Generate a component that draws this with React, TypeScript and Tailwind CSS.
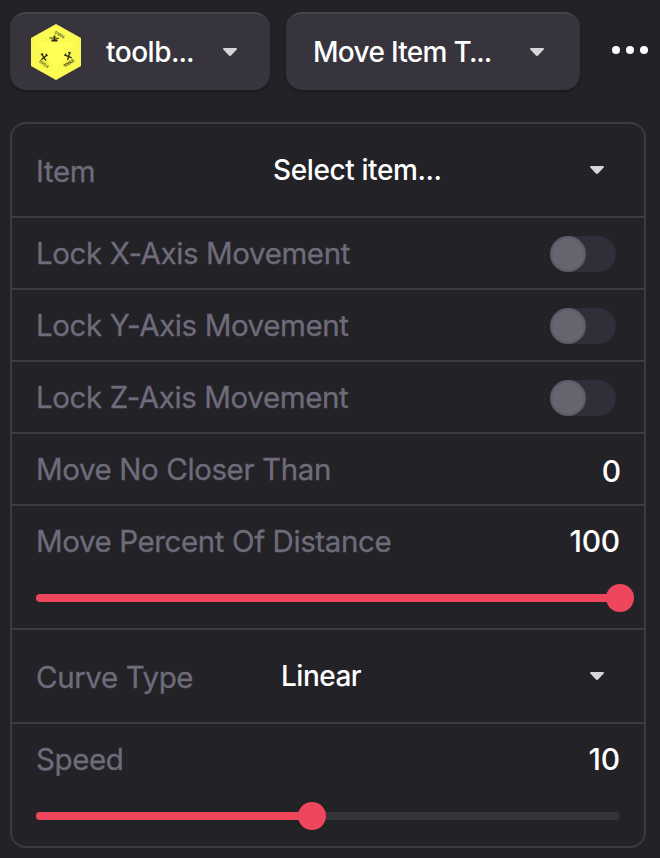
import type { ReactNode } from "react";

function Caret({ className = "" }: { className?: string }) {
  return (
    <svg className={`h-2 w-3.5 shrink-0 ${className}`} viewBox="0 0 14 8" fill="#d6d6d8">
      <path d="M.8 0H13.200q1.200.3.500 1.400L8.300 7.300q-1.300 1.300-2.600 0L.3 1.400Q-.4.3.8 0Z" />
    </svg>
  );
}

function Figure({ transform }: { transform: string }) {
  return (
    <g transform={transform} stroke="#2b2b16" fill="none">
      <path d="M-2.800-3.200 2.600 3.200M2.600-3-2.600 3" strokeWidth="1.500" />
      <path d="M-4-2.500-1.600-4.200M1.400-4.200 3.600-2.200" strokeWidth="1.500" />
    </g>
  );
}

function Logo() {
  return (
    <svg className="mt-0.5 h-14 w-[50px] shrink-0" viewBox="0 0 50 56">
      <path d="M25 0 50 14V42L25 56 0 42V14Z" fill="#fbfb52" />
      <path d="M25 47 6 18H44Z" fill="#ffff58" />
      <path d="M0 14 6 18 25 47 0 42ZM50 14 44 18 25 47 50 42Z" fill="#f8f84f" opacity=".6" />
      <g stroke="#2b2b16" fill="none">
        <path d="M23.500 11.500V16.500M20.500 16.500H26.500" strokeWidth="1.800" />
        <path d="M18.500 14H22.500M24.500 14.300H28" strokeWidth="1" />
      </g>
      <Figure transform="translate(13 33.500) rotate(8) scale(.9)" />
      <Figure transform="translate(37.500 32.500) rotate(-25) scale(-.9 .9)" />
      <g fill="#2b2b16" fontFamily="Inter, sans-serif" fontWeight="700" fontSize="4" textAnchor="middle">
        <text transform="translate(29 11) rotate(208)" y="1.500" opacity=".75">TOOLS</text>
        <text transform="translate(12.500 39.800) rotate(32)" y="1.500" opacity=".7">TOOLS</text>
        <text transform="translate(37.500 39.200) rotate(-32)" y="1.500">TOOLS</text>
      </g>
    </svg>
  );
}

function Row({ tall, children }: { tall?: boolean; children: ReactNode }) {
  return (
    <div className={`box-content flex items-center ${tall ? "h-[92px]" : "h-[70px]"}`}>
      <div className="flex w-full items-center px-6">{children}</div>
    </div>
  );
}

function Label({ children }: { children: ReactNode }) {
  return (
    <span className="text-[29.5px] leading-9 tracking-[-0.4px] text-[#6f6b7b] [-webkit-text-stroke:0.3px_#6f6b7b]">
      {children}
    </span>
  );
}

function ToggleRow({ label }: { label: string }) {
  return (
    <Row>
      <Label>{label}</Label>
      <span className="mt-px mr-1 -mb-px ml-auto flex h-9 w-[66px] rounded-full bg-[#302e38]">
        <span className="size-9 rounded-full border-2 border-[#5d5967] bg-[#67636f]" />
      </span>
    </Row>
  );
}

function SliderRow({ label, value, fill }: { label: string; value: number; fill: number }) {
  return (
    <div className="box-content h-[122px]">
      <div className="flex h-[70px] items-center justify-between px-6">
        <Label>{label}</Label>
        <span className="text-[30px] font-medium tracking-[-0.2px]">{value}</span>
      </div>
      <div className="relative mx-6 mt-[18px] h-2 rounded-full bg-[#35333b]">
        <div className="h-2 rounded-full bg-[#ee465c]" style={{ width: fill }} />
        <div
          className="absolute -top-2.5 size-7 -translate-x-1/2 rounded-full bg-[#ee465c]"
          style={{ left: fill }}
        />
      </div>
    </div>
  );
}

const picker =
  "flex h-[78px] items-center rounded-2xl border-t-2 border-[#47454c] bg-[#37343e] pb-0.5 text-[28px] font-medium shadow-[0_2px_3px_rgba(0,0,0,0.25)]";

export default function App() {
  return (
    <div className="h-[858px] w-[660px] overflow-hidden bg-[#232227] pt-3 pl-2.5 font-['Inter',sans-serif] text-white">
      <header className="flex items-center">
        <button className={`${picker} w-[260px] pl-[21px] tracking-[-0.5px]`}>
          <Logo />
          <span className="ml-[25px] w-[116.5px] pt-0.5 text-left">
            toolb<span className="tracking-[-1px]">...</span>
          </span>
          <Caret className="mt-0.5" />
        </button>
        <button className={`${picker} ml-4 w-[294px] pl-[27px] tracking-[-0.7px]`}>
          <span className="w-[216.5px] pt-0.5 text-left">
            Move Item T<span className="-ml-[2px] tracking-[-1.2px]">...</span>
          </span>
          <Caret className="mt-0.5" />
        </button>
        <div className="mb-0.5 ml-8 flex gap-1.5">
          <span className="size-2 rounded-full bg-white" />
          <span className="size-2 rounded-full bg-white" />
          <span className="size-2 rounded-full bg-white" />
        </div>
      </header>
      <main className="mt-8 w-[636px] divide-y-2 divide-[#3c3b41] rounded-2xl border-2 border-[#3c3b41]">
        <Row tall>
          <span className="pt-0.5">
            <Label>Item</Label>
          </span>
          <span className="ml-auto w-[316.5px] text-[28px] font-medium tracking-[-0.4px]">Select item...</span>
          <Caret className="mr-[16.5px]" />
        </Row>
        <ToggleRow label="Lock X-Axis Movement" />
        <ToggleRow label="Lock Y-Axis Movement" />
        <ToggleRow label="Lock Z-Axis Movement" />
        <Row>
          <Label>Move No Closer Than</Label>
          <span className="mt-0.5 -mr-px -mb-0.5 ml-auto text-[30px] leading-9 font-medium tracking-[-0.2px]">0</span>
        </Row>
        <SliderRow label="Move Percent Of Distance" value={100} fill={584} />
        <Row tall>
          <span className="pt-0.5">
            <Label>Curve Type</Label>
          </span>
          <span className="ml-auto w-[308.5px] text-[28px] font-medium tracking-[-0.5px]">Linear</span>
          <Caret className="mr-[16.5px]" />
        </Row>
        <SliderRow label="Speed" value={10} fill={276} />
      </main>
    </div>
  );
}
